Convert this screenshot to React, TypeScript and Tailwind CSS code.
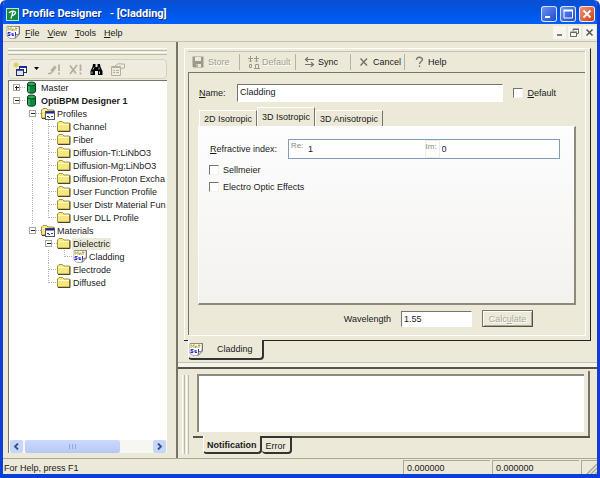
import React, { useState } from 'react'
import clsx from 'clsx'

type Cell = 'blank' | 'line' | 'tee' | 'elbow' | 'plus' | 'minus'
type IconName = 'database' | 'group' | 'folder' | 'material'

interface TreeRow {
  label: string
  icon: IconName
  cells: Cell[]
  bold?: boolean
}

const rows: TreeRow[] = [
  { label: 'Master', icon: 'database', cells: ['plus'] },
  { label: 'OptiBPM Designer 1', icon: 'database', cells: ['minus'], bold: true },
  { label: 'Profiles', icon: 'group', cells: ['blank', 'minus'] },
  { label: 'Channel', icon: 'folder', cells: ['blank', 'line', 'tee'] },
  { label: 'Fiber', icon: 'folder', cells: ['blank', 'line', 'tee'] },
  { label: 'Diffusion-Ti:LiNbO3', icon: 'folder', cells: ['blank', 'line', 'tee'] },
  { label: 'Diffusion-Mg:LiNbO3', icon: 'folder', cells: ['blank', 'line', 'tee'] },
  { label: 'Diffusion-Proton Excha', icon: 'folder', cells: ['blank', 'line', 'tee'] },
  { label: 'User Function Profile', icon: 'folder', cells: ['blank', 'line', 'tee'] },
  { label: 'User Distr Material Fun', icon: 'folder', cells: ['blank', 'line', 'tee'] },
  { label: 'User DLL Profile', icon: 'folder', cells: ['blank', 'line', 'elbow'] },
  { label: 'Materials', icon: 'group', cells: ['blank', 'minus'] },
  { label: 'Dielectric', icon: 'folder', cells: ['blank', 'blank', 'minus'] },
  { label: 'Cladding', icon: 'material', cells: ['blank', 'blank', 'line', 'elbow'] },
  { label: 'Electrode', icon: 'folder', cells: ['blank', 'blank', 'tee'] },
  { label: 'Diffused', icon: 'folder', cells: ['blank', 'blank', 'elbow'] },
]

function TreeCell({ kind }: { kind: Cell }) {
  const box = kind === 'plus' || kind === 'minus'
  return (
    <svg width="16" height="13" viewBox="0 0 16 13" className="shrink-0" shapeRendering="crispEdges">
      <g stroke="#b4b4b0" strokeDasharray="1 1" fill="none">
        {(kind === 'line' || kind === 'tee') && <path d="M7.5 0V13" />}
        {kind === 'elbow' && <path d="M7.5 0V7" />}
        {(kind === 'tee' || kind === 'elbow') && <path d="M8 6.5H16" />}
        {box && <path d="M11 6.5H16" />}
      </g>
      {box && (
        <>
          <rect x="4.5" y="3.5" width="6" height="6" fill="#fff" stroke="#a8a698" />
          <path d={kind === 'plus' ? 'M6 6.5H10M7.5 5V9' : 'M6 6.5H10'} stroke="#222" />
        </>
      )}
    </svg>
  )
}

function MaterialIcon() {
  return (
    <svg width="14" height="13" viewBox="0 0 14 13" className="shrink-0">
      <path d="M1 .5H13V8L9 12.5H4L2.5 10.5L1 10Z" fill="#fff" />
      <path d="M1 .5H13.5V8L9 12.5L9.5 8.5L13 8" fill="#ddd" stroke="#555" strokeWidth=".8" />
      <path d="M1 .5V10L4 12.5H9" fill="none" stroke="#999" strokeWidth=".8" />
      <path d="M1 .8H12V8H1Z" fill="#fff" />
      <path d="M2 5V1.5L3.5 3.5L5 1.5V5M6.5 5V3H8V5M10 1V5M9 2.5H11.5" fill="none" stroke="#b3a83a" />
      <path d="M4.5 6.5H2V8H4V9.5H1.5M6 8H8M6 7V9.5H8M9.5 6V9.5" fill="none" stroke="#2a2ad8" />
    </svg>
  )
}

function TreeIcon({ name }: { name: IconName }) {
  if (name === 'material') return <MaterialIcon />
  if (name === 'database') {
    return (
      <svg width="14" height="13" viewBox="0 0 14 13" className="shrink-0">
        <path d="M2.5 3V10.5C2.5 12.8 10.5 12.8 10.5 10.5V3Z" fill="#088a3c" stroke="#12351f" />
        <path d="M4 4V11" stroke="#5ed18b" />
        <ellipse cx="6.5" cy="3" rx="4" ry="2" fill="#1fb25a" stroke="#12351f" />
      </svg>
    )
  }
  return (
    <svg width="14" height="13" viewBox="0 0 14 13" className="shrink-0">
      <path d="M.5 11V3L2 1.5H5.5L7 3H12.5V11Z" fill="#f6e77f" stroke="#a8953c" />
      <path d="M1.5 4.5H12" stroke="#fffbd0" />
      <path d="M1 11.5H13V3.5" fill="none" stroke="#4b4524" />
      {name === 'group' && (
        <>
          <rect x="4.5" y="4.5" width="9" height="8" fill="#fff" stroke="#55557a" />
          <path d="M5 5.5H13" stroke="#23239a" strokeWidth="2" />
          <path d="M6 9.5H8M7.5 10.5H9M10 9.5H12" stroke="#444" />
        </>
      )}
    </svg>
  )
}

function Tree() {
  const [selected, setSelected] = useState('Dielectric')
  return (
    <ul role="tree" className="flex-1 overflow-hidden">
      {rows.map((row) => (
        <li
          key={row.label}
          role="treeitem"
          aria-selected={selected === row.label}
          onClick={() => setSelected(row.label)}
          className={clsx('flex h-[13px] items-center whitespace-nowrap', row.bold && 'font-bold')}
        >
          {row.cells.map((cell, i) => (
            <TreeCell key={i} kind={cell} />
          ))}
          <TreeIcon name={row.icon} />
          <span className={clsx('ml-px px-px', selected === row.label && 'bg-[#ece9d8]')}>{row.label}</span>
        </li>
      ))}
    </ul>
  )
}

function TitleBar() {
  const button = 'flex size-4 items-center justify-center rounded-[3px] border border-white/80'
  return (
    <header className="flex h-6 items-center bg-linear-to-b from-[#0a4fd0] via-[#0055e6] to-[#0060fa] pt-1 pl-[3px] pr-0.5 text-white">
      <svg width="13" height="13" viewBox="0 0 13 13">
        <rect x=".5" y=".5" width="12" height="12" fill="#158a3e" stroke="#c9e6c4" />
        <path d="M5 10.5L7 3.5M3 5C4 3 9 2.5 9.5 4.5C9.5 6.5 7 7.5 5.5 7.5" fill="none" stroke="#fff" strokeWidth="1.3" />
      </svg>
      <h1 className="ml-[3px] flex-1 font-[Roboto,sans-serif] text-[11px] leading-4 font-bold whitespace-pre [text-shadow:1px_1px_0_#0a2f8c]">
        {'Profile Designer   - [Cladding]'}
      </h1>
      <div className="flex gap-[3px]">
        <button aria-label="Minimize" className={clsx(button, 'bg-linear-to-br from-[#6c92f2] to-[#1c48cf]')}>
          <svg width="12" height="12"><path d="M2 9H7" stroke="#fff" strokeWidth="2" /></svg>
        </button>
        <button aria-label="Maximize" className={clsx(button, 'bg-linear-to-br from-[#6c92f2] to-[#1c48cf]')}>
          <svg width="12" height="12"><path d="M2 2.5H10.5V10H2Z" fill="none" stroke="#fff" /><path d="M1.5 2.5H11" stroke="#fff" strokeWidth="2" /></svg>
        </button>
        <button aria-label="Close" className={clsx(button, 'bg-linear-to-br from-[#ee9478] to-[#cc3c14]')}>
          <svg width="12" height="12"><path d="M2.5 2.5L9.5 9.5M9.5 2.5L2.5 9.5" stroke="#fff" strokeWidth="1.8" /></svg>
        </button>
      </div>
    </header>
  )
}

function MenuBar() {
  const mdi = 'flex h-[13px] w-[13px] items-center justify-center bg-[#f6f5ee]'
  return (
    <nav className="flex h-[18px] items-center border-b border-[#c5c2b2] pl-[3px] pr-px">
      <MaterialIcon />
      <div className="ml-[5px] flex flex-1 gap-2">
        {['File', 'View', 'Tools', 'Help'].map((item) => (
          <button key={item}>
            <u>{item[0]}</u>
            {item.slice(1)}
          </button>
        ))}
      </div>
      <div className="flex gap-0.5">
        <button aria-label="Minimize document" className={mdi}>
          <svg width="9" height="9"><path d="M2 7H7" stroke="#555" strokeWidth="1.5" /></svg>
        </button>
        <button aria-label="Restore document" className={mdi}>
          <svg width="9" height="9" fill="none" stroke="#666"><path d="M3 3V1.5H8.5V5.5H6.5M.5 4.5H6.5V8.5H.5ZM3 1H9M.5 4H7" /></svg>
        </button>
        <button aria-label="Close document" className={mdi}>
          <svg width="9" height="9"><path d="M1.5 1.5L7.5 7.5M7.5 1.5L1.5 7.5" stroke="#555" strokeWidth="1.5" /></svg>
        </button>
      </div>
    </nav>
  )
}

function SideBar() {
  return (
    <aside className="flex w-[175px] shrink-0 flex-col border-r-2 border-[#77756b] pt-1.5 pr-[9px] pb-[5px] pl-[5px]">
      <div className="h-[3px] border-y border-t-white border-b-[#bdbaa9]" />
      <div className="mt-px h-[3px] border-y border-t-white border-b-[#bdbaa9]" />
      <div className="mt-1 mb-px flex h-5 items-center gap-2 rounded-sm border border-[#d6d2c0] bg-[#efecdf] pl-1">
        <div className="flex items-center gap-1.5">
          <button aria-label="New">
            <svg width="15" height="15" viewBox="0 0 15 15">
              <path d="M3 0V6M0 3H6M1 1L5 5M5 1L1 5" stroke="#d8c832" strokeWidth=".9" />
              <rect x="6.5" y="4.5" width="7" height="6" fill="#fff" stroke="#222a66" />
              <path d="M6 5H14" stroke="#222a88" strokeWidth="2" />
              <rect x="3.5" y="7.5" width="7" height="6" fill="#dbe4f2" stroke="#222a66" />
              <path d="M3 8H11" stroke="#222a88" strokeWidth="1.5" />
            </svg>
          </button>
          <button aria-label="New menu">
            <svg width="5" height="4"><path d="M0 0H5L2.5 3Z" fill="#000" /></svg>
          </button>
        </div>
        <button aria-label="Edit" disabled>
          <svg width="14" height="13" viewBox="0 0 14 13" fill="none" stroke="#b4b09e">
            <path d="M1 10.5H3.5L5 9" strokeWidth="1.5" />
            <path d="M4.5 8.5L8.5 3.5" strokeWidth="3" />
            <path d="M12 1.5V8M12 9.5V11.5" strokeWidth="1.8" />
          </svg>
        </button>
        <button aria-label="Delete" disabled>
          <svg width="13" height="13" viewBox="0 0 13 13" fill="none" stroke="#b4b09e" strokeWidth="1.8">
            <path d="M1 2.5L7 10.5M8 2L1 11M11.5 1.5V8M11.5 9.5V11.5" />
          </svg>
        </button>
        <button aria-label="Find">
          <svg width="13" height="13" viewBox="0 0 13 13">
            <path d="M3 1H5.5V4H7.5V1H10L10.5 4L12.5 8V12H8V8H5V12H.5V8L2.5 4Z" fill="#000" />
            <path d="M2 8.5V11M9.5 8.5V11M4 4.5L3 6.5M9 4.5V6.5" stroke="#fff" strokeWidth=".7" />
          </svg>
        </button>
        <button aria-label="Properties" disabled>
          <svg width="14" height="13" viewBox="0 0 14 13" fill="none" stroke="#b4b09e">
            <path d="M.5 3.5H9.5V12.5H.5ZM1 4.5H9M2 7.5H4M5 7.5H8M2 9.5H4M5 9.5H8M4 3L7 .8H10M10 1L13.5 1V5L9 5.5" />
          </svg>
        </button>
      </div>
      <div className="flex flex-1 flex-col border-t border-l border-[#77756b] bg-white">
        <Tree />
        <div className="flex h-[13px] items-stretch gap-0.5 bg-[#f6f6f3] px-px">
          <button aria-label="Scroll left" className="flex w-[13px] items-center justify-center rounded-xs bg-[#c6d5fb]">
            <svg width="7" height="7"><path d="M5 .5L2 3.5L5 6.5" fill="none" stroke="#34507f" strokeWidth="1.8" /></svg>
          </button>
          <div className="flex flex-1">
            <div className="flex w-3/4 items-center justify-center rounded-xs bg-linear-to-b from-[#cbd9fd] to-[#b5c8f5]">
              <svg width="7" height="5"><path d="M.5 0V5M3.5 0V5M6.5 0V5" stroke="#8fa9e6" /></svg>
            </div>
          </div>
          <button aria-label="Scroll right" className="flex w-[13px] items-center justify-center rounded-xs bg-[#c6d5fb]">
            <svg width="7" height="7"><path d="M2 .5L5 3.5L2 6.5" fill="none" stroke="#34507f" strokeWidth="1.8" /></svg>
          </button>
        </div>
      </div>
    </aside>
  )
}

function ActionBar() {
  const off = 'text-[#a09d8e] [text-shadow:1px_1px_0_#fff]'
  const item = 'flex items-center'
  const divider = <span className="h-4 border-r border-[#b5b2a2]" />
  return (
    <div className="flex h-[21px] items-center border-t border-[#c5c2b2] pl-1">
      <button disabled className={clsx(item, 'w-[47px] gap-1', off)}>
        <svg width="12" height="12" viewBox="0 0 12 12">
          <path d="M.5 .5H11.5V11.5H1.5L.5 10.5Z" fill="#9c998b" />
          <path d="M3 1H9V5H3ZM4 8H9V11H4Z" fill="#ece9d8" />
          <path d="M5 8.5V11" stroke="#9c998b" strokeWidth="1.5" />
        </svg>
        Store
      </button>
      {divider}
      <button disabled className={clsx(item, 'w-[55px] gap-0.5 pl-[7px]', off)}>
        <svg width="13" height="13" viewBox="0 0 13 13" fill="none" stroke="#9c998b">
          <path d="M3.5 0V6M2 4.5L3.5 6L5 4.5M9.5 0V6M8 4.5L9.5 6L11 4.5M1 2.5H6M7 2.5H12" />
          <path d="M2.5 8.5H4.5V11.5H2.5ZM8.5 12V8.5H11.5V12M7 12.5H13" />
        </svg>
        Default
      </button>
      {divider}
      <button className={clsx(item, 'w-[54px] gap-[3px] pl-2')}>
        <svg width="11" height="10" fill="none" stroke="#77756b" strokeWidth="1.2"><path d="M10 2.5H1.5M4 .2L1.5 2.5L4 4.8M1 7.5H9.5M7 5.2L9.5 7.5L7 9.8" /></svg>
        Sync
      </button>
      {divider}
      <button className={clsx(item, 'w-[53px] gap-1 pl-2')}>
        <svg width="10" height="10"><path d="M1.5 1.5L8 8.5M8 1.5L1.5 8.5" stroke="#77756b" strokeWidth="1.5" /></svg>
        Cancel
      </button>
      {divider}
      <button className={clsx(item, 'gap-1 pl-2.5')}>
        <svg width="9" height="12"><path d="M1.5 4C1 .5 7.5 .5 7.5 3.5C7.5 5.5 4.5 5.5 4.5 8M4.5 9.5V11" fill="none" stroke="#77756b" strokeWidth="1.4" /></svg>
        Help
      </button>
    </div>
  )
}

function CheckBox({ id, children }: { id: string; children: React.ReactNode }) {
  return (
    <div className="flex items-center gap-1">
      <input
        id={id}
        type="checkbox"
        className="size-2.5 appearance-none border border-[#f4f2e8] border-t-[#77756b] border-l-[#77756b] bg-white checked:bg-[#77756b]"
      />
      <label htmlFor={id}>{children}</label>
    </div>
  )
}

function ProfileForm() {
  const [tab, setTab] = useState('3D Isotropic')
  const field = 'min-w-0 border border-white border-t-[#77756b] border-l-[#77756b] bg-white outline-none'
  return (
    <form className="flex flex-1 flex-col border-t border-l border-[#77756b] pt-[11px] pr-[9px] pb-2 pl-[9px]">
      <div className="flex items-center pr-5">
        <label htmlFor="name" className="w-[39px] pl-px"><u>N</u>ame:</label>
        <input id="name" defaultValue="Cladding" className={clsx(field, 'mr-2.5 h-[18px] flex-1 px-0.5 pb-0.5')} />
        <CheckBox id="default"><u>D</u>efault</CheckBox>
      </div>
      <div role="tablist" className="mt-[5px] flex h-[19px] items-end pl-px">
        {['2D Isotropic', '3D Isotropic', '3D Anisotropic'].map((name) => (
          <button
            key={name}
            type="button"
            role="tab"
            aria-selected={tab === name}
            onClick={() => setTab(name)}
            className={clsx(
              'border-t border-r border-l border-t-white border-l-white border-r-[#77756b] px-1',
              tab === name ? 'h-[19px]' : 'h-4',
            )}
          >
            {name}
          </button>
        ))}
      </div>
      <div
        role="tabpanel"
        className="flex flex-1 flex-col gap-[5px] border-t border-r-2 border-b-2 border-l border-[#8d8a7c] border-t-white border-l-white bg-linear-to-b from-[#fdfdfe] to-[#f4f2ef] pt-3 pr-3.5 pl-2.5"
      >
        <div className="flex items-center">
          <label htmlFor="re" className="w-[79px] pl-px"><u>R</u>efractive index:</label>
          <div className="flex h-5 flex-1 items-stretch border border-[#7f9db9] bg-white">
            <label htmlFor="re" className="w-[18px] pl-0.5 text-[8px] text-[#8c8a7a]">Re:</label>
            <input id="re" defaultValue="1" className="w-0 min-w-0 flex-1 px-px outline-none" />
            <label htmlFor="im" className="w-[15px] border border-[#eeece4] text-[8px] text-[#8c8a7a]">Im:</label>
            <input id="im" defaultValue="0" className="w-0 min-w-0 flex-1 px-0.5 outline-none" />
          </div>
        </div>
        <CheckBox id="sellmeier">Sellmeier</CheckBox>
        <CheckBox id="electro">Electro Optic Effects</CheckBox>
      </div>
      <div className="mt-[5px] flex items-center justify-end pr-[43px]">
        <label htmlFor="wavelength" className="mr-2.5">Wavelength</label>
        <input id="wavelength" defaultValue="1.55" className={clsx(field, 'mr-2.5 h-4 w-[71px] px-0.5')} />
        <button
          type="button"
          disabled
          className="h-[17px] w-[51px] border border-[#55534a] border-t-[#77756b] border-l-[#77756b] text-[#aca899] shadow-[inset_1px_1px_0_#fff,inset_-1px_-1px_0_#aca899] [text-shadow:1px_1px_0_#fff]"
        >
          Calc<u>u</u>late
        </button>
      </div>
    </form>
  )
}

function DocumentArea() {
  return (
    <section className="flex flex-1 flex-col pt-1.5 pr-1.5 pb-0.5 pl-1.5">
      <div className="flex flex-1 flex-col border-t border-r border-l border-white border-r-[#222]">
        <div className="flex flex-1 flex-col pt-0.5 pr-1 pb-1 pl-[3px]">
          <div className="flex flex-1 flex-col border-r border-b border-white">
            <ActionBar />
            <ProfileForm />
          </div>
        </div>
      </div>
      <div className="flex">
        <div className="w-1 border-t border-[#222]" />
        <button className="flex h-5 w-[76px] items-center gap-3.5 rounded-b-sm border-r-2 border-b-2 border-l border-[#333] border-l-white">
          <MaterialIcon />
          Cladding
        </button>
        <div className="flex-1 border-t border-[#222]" />
      </div>
    </section>
  )
}

function OutputPanel() {
  const [tab, setTab] = useState('Notification')
  return (
    <section className="flex border-t-2 border-[#55534a] pt-0.5 pb-1 pl-1">
      <div className="mt-1 flex w-[11px] gap-px">
        <div className="w-[3px] border-x border-l-white border-r-[#bdbaa9]" />
        <div className="w-[3px] border-x border-l-white border-r-[#bdbaa9]" />
      </div>
      <div className="mr-[7px] flex flex-1 flex-col">
        <div className="flex border-r-2 border-[#77756b] pt-[3px] pr-1 pb-1 pl-1">
          <textarea
            aria-label="Notifications"
            readOnly
            className="h-[58px] flex-1 resize-none border-t-2 border-l-2 border-[#8d8a7c] bg-white outline-none"
          />
        </div>
        <div className="flex">
          <div className="w-2.5 border-t-2 border-[#55534a]" />
          {['Notification', 'Error'].map((name) => (
            <button
              key={name}
              onClick={() => setTab(name)}
              className={clsx(
                'h-[18px] rounded-b-sm border-r-2 border-b-2 border-[#333]',
                tab === name ? 'border-l border-l-white px-[3px] pt-0.5 font-bold' : 'border-t-2 px-1 pt-px',
              )}
            >
              {name}
            </button>
          ))}
          <div className="flex-1 border-t-2 border-[#55534a]" />
        </div>
      </div>
    </section>
  )
}

function StatusBar() {
  const pane = 'flex w-[87px] items-center border-t border-l border-[#aca899] pl-[3px]'
  return (
    <footer className="flex h-4 gap-0.5 border-t border-[#aca899] pt-px">
      <p className="flex-1 pt-0.5 pl-px">For Help, press F1</p>
      <output className={pane}>0.000000</output>
      <output className={pane}>0.000000</output>
      <div className="flex w-4 items-end justify-end border-t border-l border-[#aca899]">
        <svg width="11" height="11"><path d="M1 11L11 1M5 11L11 5M9 11L11 9" stroke="#aca899" strokeWidth="1.5" /></svg>
      </div>
    </footer>
  )
}

export default function App() {
  return (
    <div className="flex min-h-screen flex-col overflow-hidden rounded-t-md border-x-[3px] border-b-4 border-[#0b3fd6] bg-[#ece9d8] font-['Liberation_Sans',Arial,sans-serif] text-[9px] leading-3 text-[#1a1a1a]">
      <TitleBar />
      <MenuBar />
      <div className="flex flex-1">
        <SideBar />
        <main className="flex min-w-0 flex-1 flex-col">
          <DocumentArea />
          <div className="h-[5px] border-t border-[#c5c2b2] bg-[#f6f4ea]" />
          <OutputPanel />
        </main>
      </div>
      <StatusBar />
    </div>
  )
}
